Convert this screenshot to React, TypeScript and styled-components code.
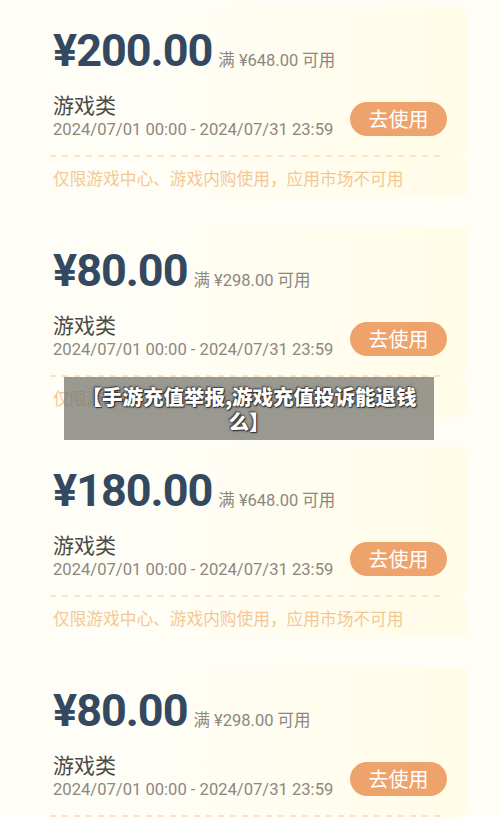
import styled, { createGlobalStyle } from 'styled-components';

const GlobalStyle = createGlobalStyle`
  html, body {
    margin: 0;
    padding: 0;
    background: #fffef6;
  }
  body {
    font-family: Roboto, "Noto Sans CJK SC", "Noto Sans", sans-serif;
    overflow: hidden;
  }
`;

interface Coupon {
  amount: string;
  threshold: string;
}

const COUPONS: Coupon[] = [
  { amount: '¥200.00', threshold: '¥648.00' },
  { amount: '¥80.00', threshold: '¥298.00' },
  { amount: '¥180.00', threshold: '¥648.00' },
  { amount: '¥80.00', threshold: '¥298.00' },
];

const PERIOD = '2024/07/01 00:00 - 2024/07/31 23:59';
const NOTE = '仅限游戏中心、游戏内购使用，应用市场不可用';
const TITLE = '【手游充值举报,游戏充值投诉能退钱么】';

export default function App() {
  return (
    <>
      <GlobalStyle />
      <Page>
        {COUPONS.map((c, i) => (
          <Card key={i}>
            <Stripes />
            <PriceRow>
              <Amount>{c.amount}</Amount>
              <Threshold>满 {c.threshold} 可用</Threshold>
            </PriceRow>
            <InfoRow>
              <InfoCol>
                <Category>游戏类</Category>
                <Period>{PERIOD}</Period>
              </InfoCol>
              <UseButton>去使用</UseButton>
            </InfoRow>
            <Dashed />
            <Note>{NOTE}</Note>
          </Card>
        ))}
      </Page>
      <TitleBanner>{TITLE}</TitleBanner>
    </>
  );
}

// ─── Styles ──────────────────────────────────────────────────────────────

const Page = styled.div`
  display: flex;
  flex-direction: column;
  gap: 30px;
  padding: 7px 32px 0 32px;
`;

const Card = styled.div`
  position: relative;
  height: 190px;
  box-sizing: border-box;
  padding: 20px 21px 0 21px;
  border-radius: 12px;
  background: linear-gradient(90deg, rgba(255, 252, 228, 0) 30%, #fffce7 100%);
  display: flex;
  flex-direction: column;

  &::after {
    content: '';
    position: absolute;
    right: -6px;
    top: 144px;
    width: 12px;
    height: 12px;
    border-radius: 50%;
    background: #fffef6;
  }
`;

const Stripes = styled.div`
  position: absolute;
  top: 0;
  left: 361px;
  width: 32px;
  height: 88px;
  background: repeating-linear-gradient(
    90deg,
    rgba(255, 255, 255, 0.95) 0 1px,
    rgba(255, 255, 255, 0) 1px 4px
  );
  pointer-events: none;
`;

const PriceRow = styled.div`
  display: flex;
  align-items: baseline;
  gap: 6px;
`;

const Amount = styled.span`
  font-family: Roboto, "Noto Sans", sans-serif;
  font-size: 45px;
  font-weight: 700;
  line-height: 1;
  color: #34495f;
  letter-spacing: -1px;
  margin-top: 1px;
`;

const Threshold = styled.span`
  font-size: 16.5px;
  color: #8c8781;
`;

const InfoRow = styled.div`
  margin-top: 18px;
  display: flex;
  align-items: flex-end;
  justify-content: space-between;
`;

const InfoCol = styled.div`
  display: flex;
  flex-direction: column;
  gap: 2px;
`;

const Category = styled.div`
  font-family: "Noto Sans CJK SC", sans-serif;
  font-size: 21px;
  line-height: 27px;
  color: #4a4a4a;
`;

const Period = styled.div`
  font-family: Roboto, sans-serif;
  font-size: 16.6px;
  line-height: 20px;
  color: #8c8781;
`;

const UseButton = styled.button`
  width: 97px;
  height: 34px;
  margin-bottom: 4px;
  border: none;
  border-radius: 17px;
  background: #eea26c;
  color: #fff;
  font-family: "Noto Sans CJK SC", sans-serif;
  font-size: 20px;
  line-height: 34px;
  padding: 0;
  cursor: pointer;
`;

const Dashed = styled.div`
  margin: 15px 2px 0 -3px;
  height: 1.5px;
  background: repeating-linear-gradient(90deg, #fde3c3 0 6px, transparent 6px 12px);
`;

const Note = styled.div`
  margin-top: 10px;
  font-family: "Noto Sans CJK SC", sans-serif;
  font-size: 16.7px;
  line-height: 22px;
  color: #f4c894;
`;

const TitleBanner = styled.div`
  position: absolute;
  top: 377px;
  left: 64px;
  width: 370px;
  box-sizing: border-box;
  padding: 7px 10px 6px;
  background: rgba(118, 118, 110, 0.74);
  color: #fff;
  font-family: "Noto Sans CJK SC", sans-serif;
  font-size: 20.5px;
  font-weight: 900;
  line-height: 25px;
  text-align: center;
  text-shadow:
    0 0 1px rgba(30, 30, 30, 0.9),
    1px 1px 1px rgba(30, 30, 30, 0.8),
    -1px -1px 1px rgba(30, 30, 30, 0.5),
    0 0 3px rgba(30, 30, 30, 0.6);
`;
